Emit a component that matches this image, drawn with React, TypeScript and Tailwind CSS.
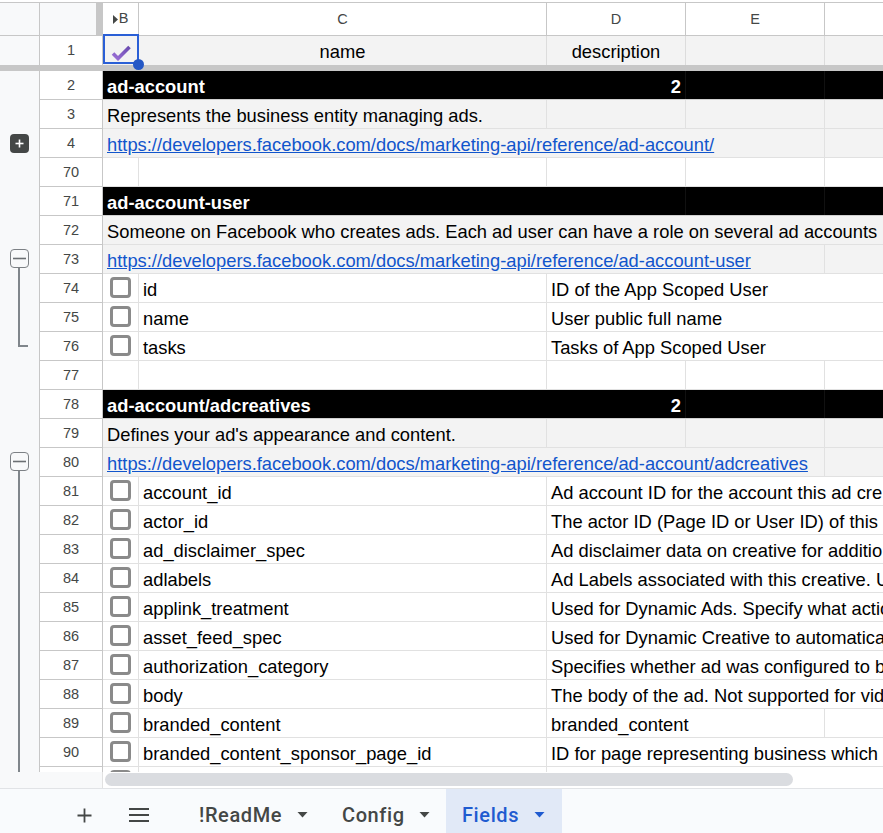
import React from "react";

const W = { b: "w-[36px]", c: "w-[408px]", d: "w-[139px]", e: "w-[139px]" };

type RowKind = "section" | "desc" | "link" | "field" | "empty";
type Row = { n: number; kind: RowKind; a?: string; b?: string; two?: boolean; grid?: number };

const base = "https://developers.facebook.com/docs/marketing-api/reference/";
const rows: Row[] = [
  { n: 2, kind: "section", a: "ad-account", two: true },
  { n: 3, kind: "desc", a: "Represents the business entity managing ads.", grid: 3 },
  { n: 4, kind: "link", a: base + "ad-account/" },
  { n: 70, kind: "empty" },
  { n: 71, kind: "section", a: "ad-account-user" },
  { n: 72, kind: "desc", a: "Someone on Facebook who creates ads. Each ad user can have a role on several ad accounts", grid: 0 },
  { n: 73, kind: "link", a: base + "ad-account-user" },
  { n: 74, kind: "field", a: "id", b: "ID of the App Scoped User" },
  { n: 75, kind: "field", a: "name", b: "User public full name" },
  { n: 76, kind: "field", a: "tasks", b: "Tasks of App Scoped User" },
  { n: 77, kind: "empty" },
  { n: 78, kind: "section", a: "ad-account/adcreatives", two: true },
  { n: 79, kind: "desc", a: "Defines your ad's appearance and content.", grid: 3 },
  { n: 80, kind: "link", a: base + "ad-account/adcreatives" },
  { n: 81, kind: "field", a: "account_id", b: "Ad account ID for the account this ad cre" },
  { n: 82, kind: "field", a: "actor_id", b: "The actor ID (Page ID or User ID) of this" },
  { n: 83, kind: "field", a: "ad_disclaimer_spec", b: "Ad disclaimer data on creative for additio" },
  { n: 84, kind: "field", a: "adlabels", b: "Ad Labels associated with this creative. U" },
  { n: 85, kind: "field", a: "applink_treatment", b: "Used for Dynamic Ads. Specify what actio" },
  { n: 86, kind: "field", a: "asset_feed_spec", b: "Used for Dynamic Creative to automatica" },
  { n: 87, kind: "field", a: "authorization_category", b: "Specifies whether ad was configured to b" },
  { n: 88, kind: "field", a: "body", b: "The body of the ad. Not supported for vid" },
  { n: 89, kind: "field", a: "branded_content", b: "branded_content" },
  { n: 90, kind: "field", a: "branded_content_sponsor_page_id", b: "ID for page representing business which" },
  { n: 91, kind: "field", a: "", b: "" },
];

const cell = "h-full shrink-0 border-r border-b border-[#e1e1e1] whitespace-nowrap overflow-visible";

function Checkbox() {
  return <div className="mt-[3px] ml-[7px] w-[21px] h-[21px] rounded-[4px] border-[3px] border-[#8a8a8a] bg-white" />;
}

function RowCells({ r }: { r: Row }) {
  if (r.kind === "section") {
    return (
      <div className="flex-1 h-full flex bg-black text-white font-bold border-b border-[#d0d0d0]">
        <div className="w-[444px] shrink-0 pl-[4px] leading-[32px] whitespace-nowrap">{r.a}</div>
        <div className="w-[139px] shrink-0 pr-[4px] text-right leading-[32px] border-r border-[#111111]">{r.two ? "2" : ""}</div>
        <div className="w-[139px] shrink-0 border-r border-[#111111]" />
      </div>
    );
  }
  if (r.kind === "desc") {
    if (r.grid === 0) {
      return (
        <div className="flex-1 h-full bg-[#f3f3f3] border-b border-[#e1e1e1] pl-[4px] leading-[32px] whitespace-nowrap overflow-hidden">{r.a}</div>
      );
    }
    return (
      <div className="flex-1 h-full flex bg-[#f3f3f3] leading-[32px]">
        <div className={`w-[444px] pl-[4px] ${cell}`}>{r.a}</div>
        <div className={`${W.d} ${cell}`} />
        <div className={`${W.e} ${cell}`} />
        <div className="flex-1 border-b border-[#e1e1e1]" />
      </div>
    );
  }
  if (r.kind === "link") {
    return (
      <div className="flex-1 h-full flex bg-[#f3f3f3] leading-[32px]">
        <div className={`w-[722px] pl-[4px] text-[#1155cc] underline ${cell}`}>{r.a}</div>
        <div className="flex-1 border-b border-[#e1e1e1]" />
      </div>
    );
  }
  if (r.kind === "empty") {
    return (
      <div className="flex-1 h-full flex">
        <div className={`${W.b} ${cell}`} />
        <div className={`${W.c} ${cell}`} />
        <div className={`${W.d} ${cell}`} />
        <div className={`${W.e} ${cell}`} />
        <div className="flex-1 border-b border-[#e1e1e1]" />
      </div>
    );
  }
  const short = r.n === 89;
  return (
    <div className="flex-1 h-full flex leading-[32px]">
      <div className={`${W.b} ${cell}`}>
        <Checkbox />
      </div>
      <div className={`${W.c} pl-[4px] ${cell}`}>{r.a}</div>
      {short ? (
        <>
          <div className={`${W.d} pl-[4px] h-full shrink-0 border-b border-[#e1e1e1] whitespace-nowrap`}>{r.b}</div>
          <div className={`${W.e} ${cell}`} />
          <div className="flex-1 border-b border-[#e1e1e1]" />
        </>
      ) : (
        <div className="flex-1 min-w-0 pl-[4px] border-b border-[#e1e1e1] whitespace-nowrap">{r.b}</div>
      )}
    </div>
  );
}

function OutlineBox({ minus, top }: { minus?: boolean; top: string }) {
  return (
    <div
      className={`absolute left-[10px] ${top} w-[19px] h-[19px] rounded-[4px] flex items-center justify-center ${
        minus ? "bg-[#f8f9fa] border-[1.5px] border-[#7d8185]" : "bg-[#444746]"
      }`}
    >
      <svg width="13" height="13" viewBox="0 0 13 13">
        {!minus && <path d="M6.5 2.5v8" stroke="#fff" strokeWidth="1.6" />}
        <path d={minus ? "M0 6.5h13" : "M2.5 6.5h8"} stroke={minus ? "#6b6f73" : "#fff"} strokeWidth="1.6" />
      </svg>
    </div>
  );
}

function Caret({ blue }: { blue?: boolean }) {
  return (
    <svg width="11" height="6" viewBox="0 0 11 6" className="shrink-0">
      <path d="M0.5 0h10L5.5 5.5z" fill={blue ? "#1f5bd0" : "#444746"} />
    </svg>
  );
}

export default function App() {
  return (
    <div
      className="relative w-[883px] h-[833px] overflow-hidden bg-white flex flex-col text-[18.34px] text-black"
      style={{ fontFamily: '"Liberation Sans", Arial, sans-serif' }}
    >
      <div className="h-[2px] shrink-0 bg-white" />
      {/* Column header */}
      <div className="h-[34px] shrink-0 flex border-t border-b border-[#c7c7c7] text-[14.5px] text-[#444746]">
        <div className="w-[40px] shrink-0 bg-[#f8f9fa] border-r border-[#c7c7c7]" />
        <div className="w-[56px] shrink-0 bg-[#f8f9fa]" />
        <div className="w-[7px] shrink-0 bg-[#c7c7c7]" />
        <div className={`${W.b} shrink-0 border-r border-[#c7c7c7] flex items-center justify-center gap-[1px]`}>
          <svg width="5" height="9" viewBox="0 0 5 9">
            <path d="M0 0l5 4.5L0 9z" fill="#444746" />
          </svg>
          <span>B</span>
        </div>
        <div className={`${W.c} shrink-0 border-r border-[#c7c7c7] text-center leading-[32px]`}>C</div>
        <div className={`${W.d} shrink-0 border-r border-[#c7c7c7] text-center leading-[32px]`}>D</div>
        <div className={`${W.e} shrink-0 border-r border-[#c7c7c7] text-center leading-[32px]`}>E</div>
        <div className="flex-1" />
      </div>
      {/* Row 1 */}
      <div className="h-[29px] shrink-0 flex bg-[#f3f3f3]">
        <div className="w-[40px] shrink-0 bg-[#f8f9fa] border-r border-[#c7c7c7]" />
        <div className="w-[63px] shrink-0 bg-white border-r border-[#c7c7c7] text-center text-[14.5px] text-[#444746] leading-[29px]">1</div>
        <div className="relative w-[36px] shrink-0 bg-[#f3f3f3]">
          <svg width="20" height="16" viewBox="0 0 20 16" className="absolute left-[8px] top-[9px]">
            <defs>
              <linearGradient id="chk" x1="0" y1="1" x2="1" y2="0">
                <stop offset="0" stopColor="#9b6fd6" />
                <stop offset="1" stopColor="#6a4bb0" />
              </linearGradient>
            </defs>
            <path d="M2 8.5l5 5L18.5 2" fill="none" stroke="url(#chk)" strokeWidth="3.6" />
          </svg>
          <div className="absolute left-0 -top-[2px] w-[36px] h-[30px] border-2 border-[#2a5fd6]" />
          <div className="absolute left-[30px] top-[23px] w-[11px] h-[11px] rounded-full bg-[#2457c5] z-10" />
        </div>
        <div className={`${W.c} shrink-0 border-r border-[#dcdcdc] text-center leading-[32px]`}>name</div>
        <div className={`${W.d} shrink-0 border-r border-[#dcdcdc] text-center leading-[32px]`}>description</div>
        <div className={`${W.e} shrink-0 border-r border-[#dcdcdc]`} />
        <div className="flex-1" />
      </div>
      <div className="h-[6px] shrink-0 bg-[#c7c7c7]" />
      {/* Body */}
      <div className="relative h-[701px] shrink-0 overflow-hidden">
        {rows.map((r) => (
          <div key={r.n} className="h-[29px] flex">
            <div className="w-[40px] shrink-0 bg-[#f8f9fa] border-r border-[#c7c7c7]" />
            <div className="w-[63px] shrink-0 bg-white border-r border-b border-[#c7c7c7] text-center text-[14.5px] text-[#444746] leading-[28px]">
              {r.n}
            </div>
            <RowCells r={r} />
          </div>
        ))}
        <OutlineBox top="top-[63px]" />
        <div className="absolute left-[18px] top-[190px] w-[2px] h-[85px] bg-[#80868b]" />
        <div className="absolute left-[18px] top-[274px] w-[10px] h-[2px] bg-[#80868b]" />
        <OutlineBox minus top="top-[178px]" />
        <div className="absolute left-[18px] top-[400px] w-[2px] h-[301px] bg-[#80868b]" />
        <OutlineBox minus top="top-[381px]" />
      </div>
      {/* Horizontal scroll */}
      <div className="h-[17px] shrink-0 flex border-b border-[#e1e3e6]">
        <div className="w-[103px] shrink-0 bg-[#f8f9fa] border-r border-[#e1e1e1]" />
        <div className="flex-1 pl-[2px] pt-[1px]">
          <div className="w-[688px] h-[13px] rounded-full bg-[#dadce0]" />
        </div>
      </div>
      {/* Tabs */}
      <div
        className="flex-1 flex bg-[#f9fbfd] text-[20px] font-medium text-[#444746] tracking-[0.6px]"
        style={{ fontFamily: 'Roboto, "Liberation Sans", sans-serif' }}
      >
        <div className="w-[69px] shrink-0" />
        <div className="w-[30px] shrink-0 pt-[8px] flex items-center justify-center">
          <svg width="15" height="15" viewBox="0 0 15 15">
            <path d="M7.5 0.5v14M0.5 7.5h14" stroke="#444746" strokeWidth="1.8" />
          </svg>
        </div>
        <div className="w-[20px] shrink-0" />
        <div className="w-[40px] shrink-0 pt-[8px] flex items-center justify-center">
          <svg width="20" height="14" viewBox="0 0 20 14">
            <path d="M0 1h20M0 7h20M0 13h20" stroke="#444746" strokeWidth="1.8" />
          </svg>
        </div>
        <div className="w-[40px] shrink-0" />
        <div className="w-[130px] shrink-0 pt-[8px] flex items-center gap-[15px]">
          <span>!ReadMe</span>
          <Caret />
        </div>
        <div className="w-[117px] shrink-0 pl-[13px] pt-[8px] flex items-center gap-[14px]">
          <span>Config</span>
          <Caret />
        </div>
        <div className="w-[116px] shrink-0 bg-[#e1e9f7] pl-[16px] pt-[8px] flex items-center gap-[15px] text-[#1f5bd0]">
          <span>Fields</span>
          <Caret blue />
        </div>
      </div>
    </div>
  );
}
